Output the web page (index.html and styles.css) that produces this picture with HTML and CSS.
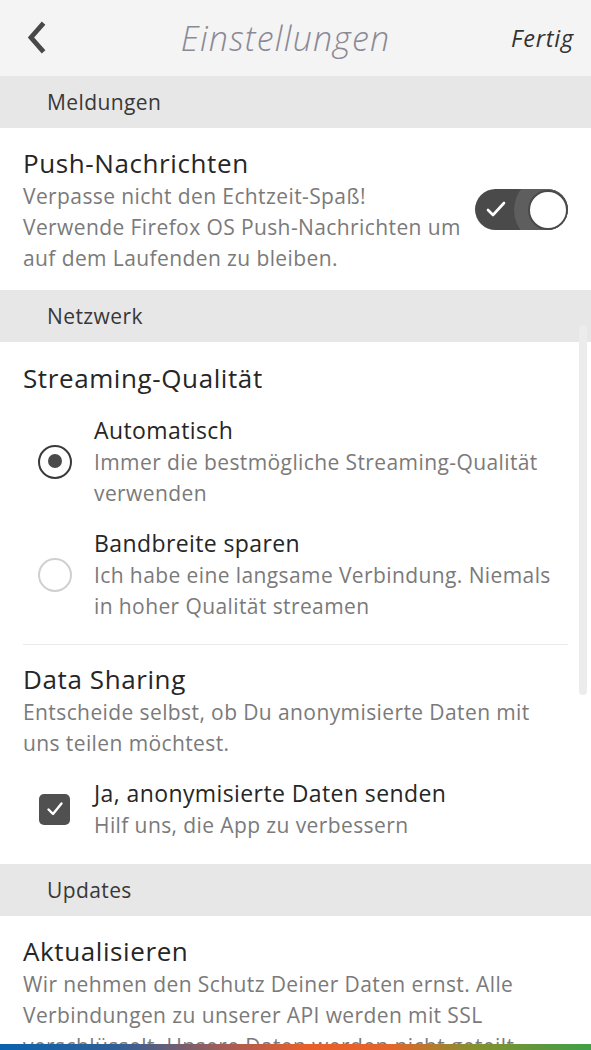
FILE: index.html
```html
<!DOCTYPE html>
<html lang="de">
<head>
<meta charset="utf-8">
<title>Einstellungen</title>
<link rel="stylesheet" href="styles.css">
</head>
<body>
<div class="screen">
  <header class="topbar">
    <button class="back" aria-label="Zurück">
      <svg width="24" height="34" viewBox="0 0 24 34"><path d="M16 4 L5 16.5 L16 29" fill="none" stroke="#484848" stroke-width="4.8" stroke-linecap="square" stroke-linejoin="miter"/></svg>
    </button>
    <h1 class="title">Einstellungen</h1>
    <button class="done">Fertig</button>
  </header>

  <main class="content">
    <h2 class="section-head">Meldungen</h2>
    <div class="item item-row">
      <div class="item-text">
        <div class="item-title">Push-Nachrichten</div>
        <p class="item-desc">Verpasse nicht den Echtzeit-Spaß!<br>Verwende Firefox OS Push-Nachrichten um<br>auf dem Laufenden zu bleiben.</p>
      </div>
      <div class="switch" role="switch" aria-checked="true">
        <svg class="switch-check" width="22" height="18" viewBox="0 0 22 18"><path d="M3 10 L8 15 L19 3" fill="none" stroke="#fff" stroke-width="2.6" stroke-linecap="round" stroke-linejoin="round"/></svg>
        <span class="switch-halo"></span>
        <span class="switch-knob"></span>
      </div>
    </div>

    <h2 class="section-head">Netzwerk</h2>
    <div class="group">
      <div class="item-title">Streaming-Qualität</div>
      <div class="option">
        <span class="radio checked"></span>
        <div class="option-text">
          <div class="option-title">Automatisch</div>
          <p class="item-desc">Immer die bestmögliche Streaming-Qualität<br>verwenden</p>
        </div>
      </div>
      <div class="option">
        <span class="radio"></span>
        <div class="option-text">
          <div class="option-title">Bandbreite sparen</div>
          <p class="item-desc">Ich habe eine langsame Verbindung. Niemals<br>in hoher Qualität streamen</p>
        </div>
      </div>
    </div>
    <div class="group group-last">
      <div class="item-title">Data Sharing</div>
      <p class="item-desc">Entscheide selbst, ob Du anonymisierte Daten mit<br>uns teilen möchtest.</p>
      <div class="option">
        <span class="checkbox">
          <svg width="20" height="18" viewBox="0 0 20 18"><path d="M3.5 9.5 L8 14 L16.5 3.5" fill="none" stroke="#fff" stroke-width="2.4" stroke-linecap="round" stroke-linejoin="round"/></svg>
        </span>
        <div class="option-text">
          <div class="option-title">Ja, anonymisierte Daten senden</div>
          <p class="item-desc">Hilf uns, die App zu verbessern</p>
        </div>
      </div>
    </div>

    <h2 class="section-head">Updates</h2>
    <div class="item">
      <div class="item-title">Aktualisieren</div>
      <p class="item-desc">Wir nehmen den Schutz Deiner Daten ernst. Alle<br>Verbindungen zu unserer API werden mit SSL<br>verschlüsselt. Unsere Daten werden nicht geteilt.</p>
    </div>
  </main>

  <div class="scrollbar"></div>
  <div class="brandbar"></div>
</div>
</body>
</html>
```

FILE: styles.css
```css
* { box-sizing: border-box; }
html, body { margin: 0; padding: 0; }
body {
  font-family: "Open Sans", "Noto Sans", sans-serif;
  background: #fff;
  color: #2a2a2a;
}
.screen {
  position: relative;
  width: 591px;
  height: 1050px;
  overflow: hidden;
  background: #fff;
}
.topbar {
  height: 76px;
  background: #f4f4f4;
  display: flex;
  align-items: center;
  padding: 0 17px 0 26px;
}
.back {
  border: 0;
  background: none;
  padding: 0;
  width: 24px;
  height: 34px;
  display: flex;
}
.title {
  flex: 1;
  margin: 0;
  text-align: center;
  font-size: 34px;
  font-weight: 300;
  font-style: italic;
  color: #8a8994;
  letter-spacing: 1.2px;
  padding-left: 10px;
}
.done {
  border: 0;
  background: none;
  padding: 0;
  font-family: inherit;
  font-size: 23.5px;
  font-style: italic;
  letter-spacing: 0.8px;
  color: #333;
}
.content { display: flex; flex-direction: column; }
.section-head {
  margin: 0;
  height: 52px;
  display: flex;
  align-items: center;
  padding-left: 47px;
  background: #e7e7e7;
  font-size: 21px;
  letter-spacing: 0.4px;
  font-weight: 400;
  color: #383838;
}
.item {
  padding: 17px 23px 16px;
}
.item-row {
  display: flex;
  align-items: center;
  justify-content: space-between;
}
.item-title {
  font-size: 26px;
  letter-spacing: 0.6px;
  line-height: 36px;
  color: #262626;
}
.item-desc {
  margin: 0;
  font-size: 21px;
  letter-spacing: 0.4px;
  line-height: 31px;
  color: #7a7a7a;
}
.switch {
  position: relative;
  width: 93px;
  height: 41px;
  border-radius: 21px;
  background: #4a4a4a;
  overflow: hidden;
  flex: none;
}
.switch-check { position: absolute; left: 10px; top: 11px; z-index: 2; }
.switch-halo {
  position: absolute;
  width: 68px;
  height: 68px;
  border-radius: 50%;
  background: #5e5e5e;
  left: 39px;
  top: -13.5px;
}
.switch-knob {
  position: absolute;
  width: 40px;
  height: 40px;
  border-radius: 50%;
  background: #fff;
  border: 2.5px solid #4a4a4a;
  left: 53px;
  top: 0.5px;
}
.group {
  margin: 0 23px;
  padding: 18px 0 22px;
  border-bottom: 1px solid #e9e9e9;
}
.group-last { border-bottom: 0; padding: 16px 0 23px; }
.option {
  display: flex;
  align-items: center;
  margin-top: 18px;
}
.option-text { padding-left: 22px; }
.option-title {
  font-size: 23px;
  letter-spacing: 0.4px;
  line-height: 33px;
  color: #262626;
}
.radio {
  flex: none;
  width: 34px;
  height: 34px;
  margin-left: 15px;
  border-radius: 50%;
  border: 2px solid #d0d0d0;
  position: relative;
}
.radio.checked { border: 2.5px solid #3a3a3a; }
.radio.checked::after {
  content: "";
  position: absolute;
  width: 14px;
  height: 14px;
  border-radius: 50%;
  background: #4a4a4a;
  left: 7.5px;
  top: 7.5px;
}
.checkbox {
  flex: none;
  width: 31px;
  height: 31px;
  margin-left: 16px;
  margin-right: 2px;
  border-radius: 5px;
  background: #505050;
  display: flex;
  align-items: center;
  justify-content: center;
}
.scrollbar {
  position: absolute;
  right: 4px;
  top: 325px;
  width: 8px;
  height: 370px;
  border-radius: 4px;
  background: #ececec;
}
.brandbar {
  position: absolute;
  left: 0;
  right: 0;
  bottom: 0;
  height: 6px;
  background: linear-gradient(to right, #0a62ad 0%, #2f5f96 20%, #a55d55 38%, #e95f2a 52%, #e4642a 66%, #86902f 80%, #3f9f46 100%);
}
```
